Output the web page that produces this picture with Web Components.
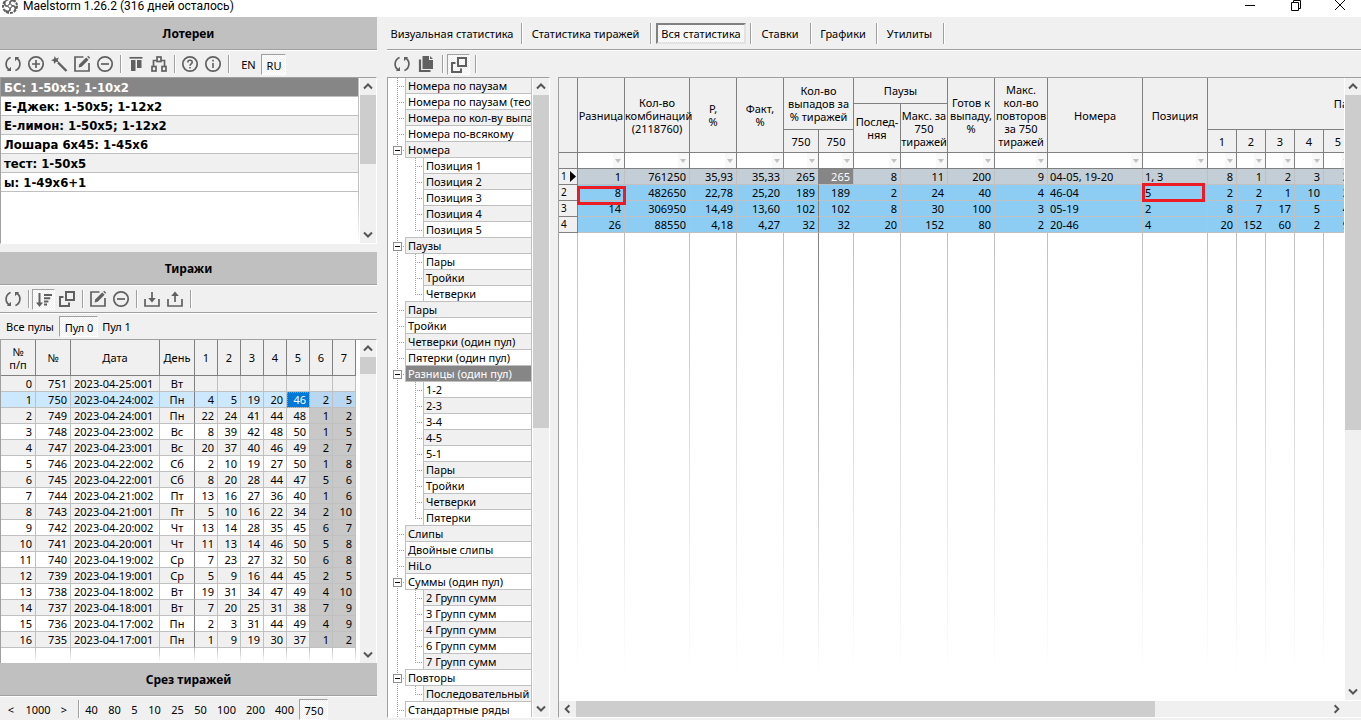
<!DOCTYPE html>
<html lang="ru">
<head>
<meta charset="utf-8">
<title>Maelstorm 1.26.2</title>
<style>
html, body { margin: 0; height: 100%; }
body {
  --ui: "DejaVu Sans Condensed", "DejaVu Sans", sans-serif;
  --face: #f0f0f0; --shade: #a0a0a0; --line: #c0c0c0; --dark: #808080; --ink: #000; --icon: #606060;
  background: var(--face); color: var(--ink); overflow: hidden;
  font: 11px/13px "Noto Sans", "Open Sans", sans-serif;
}
</style>
</head>
<body>
<mael-app></mael-app>
<script>
const define = (name, html, setup) => customElements.define(name, class extends HTMLElement {
  constructor() {
    super();
    const t = document.createElement('template');
    t.innerHTML = html;
    this.attachShadow({ mode: 'open' }).append(t.content.cloneNode(true));
  }
  connectedCallback() {
    if (setup && !this.ready) { this.ready = true; setup(this, this.shadowRoot); }
  }
});

/* ---------- icons, on an 18 x 18 grid ---------- */
const ICONS = {
  refresh: '<path d="M6.600 2.500A7 7 0 0 0 5 14.700M11.400 15.500A7 7 0 0 0 13 3.300"/><path fill="currentColor" stroke="none" d="M2.800 16H7V11.800L5.400 13.600ZM15.200 2H11V6.200L12.600 4.400Z"/>',
  add: '<circle cx="9" cy="9" r="7.2"/><path d="M9 5V13M5 9H13"/>',
  remove: '<circle cx="9" cy="9" r="7.2"/><path d="M5 9H13"/>',
  wand: '<path d="M8 7.5L16.5 16" stroke-width="2.4"/><path fill="currentColor" stroke="none" d="M4.8 1L6 3.4 9 2.6 7.6 5 9 7.6 6.2 6.8 4 9 3.8 6.2 1 5.2 3.8 4Z"/>',
  edit: '<path d="M10.5 2H2V16H16V8"/><path d="M5.600 12.400L6.200 9.400 13.200 2.400 15.600 4.800 8.600 11.800Z" fill="currentColor" stroke="none"/><path d="M14.2 1.8L15.2 .8 17.2 2.8 16.2 3.8Z" fill="currentColor" stroke="none"/>',
  align: '<path d="M2.500 2.800H15.500" /><path d="M4 5H8.500V16H4ZM10 5H14.500V13H10Z" fill="currentColor" stroke="none"/>',
  tree: '<path d="M3.5 11V5.5H7M14.5 11V5.5H11"/><rect x="7" y="2" width="4" height="4.5"/><rect x="2" y="11.5" width="4" height="4.5"/><rect x="12" y="11.5" width="4" height="4.5"/>',
  help: '<circle cx="9" cy="9" r="7.2"/><path d="M6.8 7.4C6.8 4.6 11.2 4.6 11.2 7.2C11.2 8.9 9 8.8 9 10.8M9 12V13.6" stroke-width="1.6"/>',
  info: '<circle cx="9" cy="9" r="7.2"/><path d="M9 8V13M9 4.8V6.4" stroke-width="1.6"/>',
  sort: '<path d="M4.5 2V13" stroke-width="2"/><path d="M1 11.5H8L4.5 16Z" fill="currentColor" stroke="none"/><path d="M9 4H17M9 7.2H15.2M9 10.4H13.4M9 13.4H12" stroke-width="2"/>',
  windows: '<rect x="8" y="2" width="8" height="8" stroke-width="2"/><path d="M5.5 7H2V16H11V12.5" stroke-width="2"/>',
  down: '<path d="M2 9V16H16V9M9 2V11"/><path d="M5.2 8H12.8L9 12.4Z" fill="currentColor" stroke="none"/>',
  up: '<path d="M2 9V16H16V9M9 12V4"/><path d="M5.2 6H12.8L9 1.4Z" fill="currentColor" stroke="none"/>',
  copy: '<path d="M5.500 1H12V5H16V14H5.500Z M13 1L16 4H13Z" fill="currentColor" stroke="none"/><path d="M3 4.5V16H13.5" stroke-width="2.2"/>',
  logo: '<circle cx="9" cy="9" r="7" stroke-width="2" stroke-dasharray="3 1"/><path d="M9 7C8 3 13 3 14 5M11 9C15 8 15 13 13 14M9 11C10 15 5 15 4 13M7 9C3 10 3 5 5 4" stroke-width="1.7"/><circle cx="9" cy="9" r="2" stroke-width="1"/>',
  minimize: '<path d="M4 8.500H14" stroke-width="1"/>',
  restore: '<path d="M4.5 5.5H11.5V13.5H4.5ZM6.5 5.5V3.5H13.5V11.5H11.5" stroke-width="1"/>',
  close: '<path d="M4 3L14 13M14 3L4 13" stroke-width="1"/>'
};
define('mael-icon', `<style>:host{display:block;width:18px;height:18px;color:var(--icon)}
svg{display:block;width:18px;height:18px;fill:none;stroke:currentColor;stroke-width:1.7}</style><svg viewBox="0 0 18 18" aria-hidden="true"></svg>`,
  (el, root) => { root.querySelector('svg').innerHTML = ICONS[el.getAttribute('name')]; });

/* ---------- toolbar parts ---------- */
define('mael-tool', `<style>
:host{display:block;flex:none}
button{box-sizing:border-box;width:var(--w,23px);height:21px;padding:0;border:1px solid transparent;background:none;font:inherit;color:inherit;display:flex;align-items:center;justify-content:center;white-space:nowrap}
:host([pressed]) button{border-color:var(--shade) #fff #fff var(--shade);background:repeating-conic-gradient(#fff 0 25%,var(--face) 0 50%) 0 0/2px 2px;padding:2px 0 0 1px}
:host([main][pressed]) button{border-width:2px;border-color:var(--dark) #e3e3e3 #e3e3e3 var(--dark);padding:0}
</style><button type="button"><slot></slot></button>`,
  (el, root) => {
    const b = root.querySelector('button');
    if (el.title) b.setAttribute('aria-label', el.title);
    if (el.hasAttribute('pressed')) b.setAttribute('aria-pressed', 'true');
  });
define('mael-sep', `<style>:host{display:block;flex:none;width:8px;height:18px;background:linear-gradient(90deg,var(--shade) 1px,#fff 1px) 4px 0/2px 100% no-repeat}</style>`);
define('mael-bar', `<style>:host{display:flex;align-items:center;height:26px;padding:0 1px;box-sizing:border-box;flex:none}</style><slot></slot>`);
define('mael-heading', `<style>:host{display:block;flex:none;border-bottom:1px solid #fff}
h2{margin:0;height:31px;padding-top:1px;font:bold 12px/31px "Noto Sans",sans-serif;text-align:center;background:var(--line);border-bottom:1px solid var(--shade)}</style><h2><slot></slot></h2>`);

/* ---------- scroll bar ---------- */
define('mael-scroll', `<style>
:host{display:flex;flex-direction:column;flex:none;width:16px;background:var(--face)}
:host([horizontal]){flex-direction:row;width:auto;height:16px}
svg{flex:none;width:16px;height:17px;fill:none;stroke:#555;stroke-width:2}
:host([horizontal]) svg{transform:rotate(-90deg);width:17px;height:16px}
.track{flex:1;display:flex;flex-direction:inherit;min-height:0;min-width:0}
.thumb{background:#cdcdcd}
</style><svg viewBox="0 0 16 17"><path d="M4 10.500L8 6.500L12 10.500"/></svg><div class="track"><div class="thumb"></div></div><svg viewBox="0 0 16 17"><path d="M4 6.500L8 10.500L12 6.500"/></svg>`,
  (el, root) => { root.querySelector('.thumb').style.flex = '0 0 ' + el.getAttribute('size') + '%'; });

/* ---------- lottery list ---------- */
define('mael-lotteries', `<style>
:host{display:flex;flex:none;height:165px;background:#fff;border:1px solid #fff;border-top-color:var(--shade);border-left-color:var(--shade)}
ul{margin:0 1px 0 0;padding:0;list-style:none;flex:1;min-width:0;font:bold 13px/17px var(--ui);background:linear-gradient(var(--line),var(--line) 70%,#fff) right/1px 100% no-repeat}
li{padding:1px 0 0 3px;border-bottom:1px solid var(--line);margin-right:1px}
li:nth-child(odd){background:var(--face)}
li[aria-selected=true]{background:#868686;color:#fff}
</style><ul role="listbox" aria-label="Лотереи"></ul><mael-scroll size="53"></mael-scroll>`,
  (el, root) => {
    root.querySelector('ul').innerHTML = ['БС: 1-50x5; 1-10x2', 'Е-Джек: 1-50x5; 1-12x2', 'Е-лимон: 1-50x5; 1-12x2', 'Лошара 6x45: 1-45x6', 'тест: 1-50x5', 'ы: 1-49x6+1']
      .map((s, i) => `<li role="option" aria-selected="${i === 0}">${s}</li>`).join('');
  });

/* ---------- draws table ---------- */
const DRAWS = `751 2023-04-25:001 Вт
750 2023-04-24:002 Пн 4 5 19 20 46 2 5
749 2023-04-24:001 Пн 22 24 41 44 48 1 2
748 2023-04-23:002 Вс 8 39 42 48 50 1 5
747 2023-04-23:001 Вс 20 37 40 46 49 2 7
746 2023-04-22:002 Сб 2 10 19 27 50 1 8
745 2023-04-22:001 Сб 8 20 28 44 47 5 6
744 2023-04-21:002 Пт 13 16 27 36 40 1 6
743 2023-04-21:001 Пт 5 10 16 22 34 2 10
742 2023-04-20:002 Чт 13 14 28 35 45 6 7
741 2023-04-20:001 Чт 11 13 14 46 50 5 8
740 2023-04-19:002 Ср 7 23 27 32 50 6 8
739 2023-04-19:001 Ср 5 9 16 44 45 2 5
738 2023-04-18:002 Вт 19 31 34 47 49 4 10
737 2023-04-18:001 Вт 7 20 25 31 38 7 9
736 2023-04-17:002 Пн 2 3 31 44 49 4 9
735 2023-04-17:001 Пн 1 9 19 30 37 1 2`.split('\n').map(r => r.split(' '));
const DRAW_COLS = [35, 35, 89, 35, 23, 23, 23, 23, 23, 23, 23];
const cols = w => '<colgroup>' + w.map(x => `<col style="width:${x}px">`).join('') + '</colgroup>';
const filler = w => `<div class="filler" style="grid-template-columns:${w.map(x => x + 'px').join(' ')}">${w.map(() => '<i></i>').join('')}</div>`;
const GRID_CSS = `
table{table-layout:fixed;border-collapse:separate;border-spacing:0;flex:none}
th,td{box-sizing:border-box;padding:0;font-weight:normal;white-space:nowrap;border-right:1px solid var(--line);border-bottom:1px solid var(--line)}
th{border-color:var(--dark);background:var(--face);text-align:center}
td{height:16px;line-height:15px;text-align:right;padding-right:3px}
.filler{display:grid;flex:1;min-height:0}
.filler i{background:linear-gradient(var(--line),#fff 95%) right/1px 100% no-repeat}`;
define('mael-draws', `<style>
:host{display:flex;flex:1;min-height:0;background:#fff;border:1px solid #fff;border-top-color:var(--shade);border-left-color:var(--shade);border-bottom:0}
.view{flex:1;min-width:0;overflow:hidden;display:flex;flex-direction:column}
${GRID_CSS}
th{height:36px}
tr:nth-child(odd) td{background:var(--face)}
td:nth-child(3){text-align:left;padding:0 0 0 3px}
td:nth-child(4){text-align:center;padding:0;border-right-color:var(--dark)}
tr:nth-child(n+2) td:nth-child(n+10){background:#c8c8c8}
tr.sel td{background:#cce8ff}
tr.sel td:nth-child(n+10){background:#b9d7f1}
tr.sel td:nth-child(9){background:#0078d7;color:#fff;outline:1px dotted #e08a3c;outline-offset:-1px}
</style><div class="view"></div><mael-scroll size="6"></mael-scroll>`,
  (el, root) => {
    const head = ['№<br>п/п', '№', 'Дата', 'День', 1, 2, 3, 4, 5, 6, 7].map(h => `<th scope="col">${h}</th>`).join('');
    const body = DRAWS.map((r, i) => `<tr${i === 1 ? ' class="sel"' : ''}><td>${i}</td>` +
      Array.from({ length: 10 }, (_, k) => `<td>${r[k] || ''}</td>`).join('') + '</tr>').join('');
    root.querySelector('.view').innerHTML = `<table style="width:355px">${cols(DRAW_COLS)}<thead><tr>${head}</tr></thead><tbody>${body}</tbody></table>` + filler(DRAW_COLS);
  });

/* ---------- statistics tree ---------- */
const TREE = [['Номера по паузам'], ['Номера по паузам (теория)'], ['Номера по кол-ву выпадов'], ['Номера по-всякому'],
  ['Номера', 'Позиция 1', 'Позиция 2', 'Позиция 3', 'Позиция 4', 'Позиция 5'], ['Паузы', 'Пары', 'Тройки', 'Четверки'],
  ['Пары'], ['Тройки'], ['Четверки (один пул)'], ['Пятерки (один пул)'],
  ['Разницы (один пул)', '1-2', '2-3', '3-4', '4-5', '5-1', 'Пары', 'Тройки', 'Четверки', 'Пятерки'],
  ['Слипы'], ['Двойные слипы'], ['HiLo'], ['Суммы (один пул)', '2 Групп сумм', '3 Групп сумм', '4 Групп сумм', '6 Групп сумм', '7 Групп сумм'],
  ['Повторы', 'Последовательный с'], ['Стандартные ряды']];
define('mael-tree', `<style>
:host{display:flex;flex:none;width:161px;background:#fff;border:1px solid #fff;border-top-color:var(--shade);border-left-color:var(--shade);overflow:hidden}
ul{margin:0 1px 0 0;padding:0;list-style:none;flex:1;min-width:0;height:0}
li{display:flex;height:16px;
 --v:repeating-linear-gradient(var(--shade) 0 1px,transparent 1px 2px);--h:repeating-linear-gradient(90deg,var(--shade) 0 1px,transparent 1px 2px);
 background:var(--v) 9px 0/1px 100% no-repeat,var(--h) 9px 8px/8px 1px no-repeat}
li.kid{background:var(--v) 9px 0/1px 100% no-repeat,var(--v) 27px 0/1px 100% no-repeat,var(--h) 27px 8px/8px 1px no-repeat}
li.kid.last{background:var(--v) 9px 0/1px 100% no-repeat,var(--v) 27px 0/1px 8px no-repeat,var(--h) 27px 8px/8px 1px no-repeat}
i{flex:none;width:17px;display:flex;align-items:center}
.kid i{width:35px}
svg{margin-left:5px;width:9px;height:9px}
span{flex:1;min-width:0;overflow:hidden;white-space:nowrap;box-sizing:border-box;height:16px;line-height:15px;padding-left:2px;border-left:1px solid var(--line);border-bottom:1px solid var(--line);border-right:1px solid var(--line);background:#fff}
li:nth-child(odd) span{background:var(--face)}
.last + li span{box-shadow:0 -1px 0 var(--line)}
li[aria-selected=true] span{background:#868686!important;color:#fff}
</style><ul role="tree" aria-label="Разделы статистики"></ul><mael-scroll size="55"></mael-scroll>`,
  (el, root) => {
    const box = '<svg viewBox="0 0 9 9" aria-hidden="true"><rect x=".5" y=".5" width="8" height="8" fill="#fff" stroke="#919191"/><path d="M2 4.500H7" stroke="#000"/></svg>';
    root.querySelector('ul').innerHTML = TREE.map(([name, ...kids]) =>
      `<li role="treeitem" aria-selected="${name.startsWith('Разницы')}"><i>${kids.length ? box : ''}</i><span>${name}</span></li>` +
      kids.map((k, n) => `<li role="treeitem" class="kid${n === kids.length - 1 ? ' last' : ''}"><i></i><span>${k}</span></li>`).join('')).join('');
  });

/* ---------- statistics grid ---------- */
const STAT_COLS = [19, 47, 65, 47, 47, 35, 35, 47, 47, 47, 53, 95, 65, 29, 29, 29, 29, 29, 141];
const STATS = ['1|761250|35,93|35,33|265|265|8|11|200|9|04-05, 19-20|1, 3|8|1|2|3|3', '8|482650|22,78|25,20|189|189|2|24|40|4|46-04|5|2|2|1|10|3',
  '14|306950|14,49|13,60|102|102|8|30|100|3|05-19|2|8|7|17|5|4', '26|88550|4,18|4,27|32|32|20|152|80|2|20-46|4|20|152|60|2|9'];
define('mael-stats', `<style>
:host{display:flex;flex-direction:column;flex:1;min-width:0;background:#fff;border:1px solid #fff;border-top-color:var(--shade);border-left-color:var(--shade);border-right:0;overflow:hidden}
.row{display:flex;flex:1;min-height:0}
.view{position:relative;flex:1;min-width:0;overflow:hidden;display:flex;flex-direction:column;margin-right:1px}
${GRID_CSS}
tr.a{height:26px} tr.c{height:23px}
tr.filter td{border-color:var(--dark);background:#fff linear-gradient(#f8f8f8,#f8f8f8) right/11px 100% no-repeat;padding:0 3px 0 0}
tr.filter svg{display:block;margin-left:auto;width:6px;height:4px;fill:var(--line)}
tr.filter td:first-child{background:var(--face)}
tbody td{background:#8dcdf4}
tbody tr:first-child td{background:#c3ced6}
tbody th{text-align:left;font-size:10px;line-height:15px;padding-left:2px;height:16px}
tbody th div{display:flex;align-items:center;gap:3px}
tbody th svg{width:6px;height:11px}
tbody td:nth-child(12),tbody td:nth-child(13){text-align:left;padding:0 0 0 2px}
tbody td:nth-child(6){border-right-color:var(--dark)}
tbody tr:first-child td:nth-child(7){background:#868686;color:#fff}
.filler i:nth-child(6){background-image:linear-gradient(var(--dark),#fff 95%)}
.mark{position:absolute;box-sizing:border-box;border:3px solid #ed1c24;height:19px}
.m1{left:18px;top:108px;width:49px}
.m2{left:583px;top:105px;width:63px}
.foot{display:flex;margin-top:1px;background:var(--face)}
.foot mael-scroll{flex:1;margin-right:16px}
</style><div class="row"><div class="view"></div><mael-scroll size="57"></mael-scroll></div><div class="foot"><mael-scroll horizontal size="77"></mael-scroll></div>`,
  (el, root) => {
    const t = (s, a = '') => `<th ${a}>${s}</th>`, full = 'rowspan="3"';
    const head = `<tr class="a">${t('', full)}${['Разница', 'Кол-во<br>комбинаций<br>(2118760)', 'P,<br>%', 'Факт,<br>%'].map(s => t(s, full)).join('')}
${t('Кол-во<br>выпадов за<br>% тиражей', 'colspan="2" rowspan="2"')}${t('Паузы', 'colspan="2"')}${['Готов к<br>выпаду,<br>%', 'Макс.<br>кол-во<br>повторов<br>за 750<br>тиражей', 'Номера', 'Позиция'].map(s => t(s, full)).join('')}${t('Паузы', 'colspan="6" rowspan="2"')}</tr>
<tr class="a">${t('Послед-<br>няя', 'rowspan="2"')}${t('Макс. за<br>750<br>тиражей', 'rowspan="2"')}</tr>
<tr class="c">${[750, 750, 1, 2, 3, 4, 5, ''].map(s => t(s)).join('')}</tr>
<tr class="filter"><td></td>${STAT_COLS.slice(1).map(() => '<td><svg viewBox="0 0 6 4"><path d="M0 0H6L3 4Z"/></svg></td>').join('')}</tr>`;
    const body = STATS.map((r, i) => `<tr><th scope="row"><div>${i + 1}${i ? '' : '<svg viewBox="0 0 6 11"><path d="M0 0L6 5.500L0 11Z"/></svg>'}</div></th>${r.split('|').map(v => `<td>${v}</td>`).join('')}<td></td></tr>`).join('');
    root.querySelector('.view').innerHTML = `<table style="width:${STAT_COLS.reduce((a, b) => a + b)}px">${cols(STAT_COLS)}<thead>${head}</thead><tbody>${body}</tbody></table>${filler(STAT_COLS)}<div class="mark m1"></div><div class="mark m2"></div>`;
  });

/* ---------- window ---------- */
const tool = (icon, title, extra = '') => `<mael-tool title="${title}" ${extra}><mael-icon name="${icon}"></mael-icon></mael-tool>`;
const word = (s, w, extra = '') => `<mael-tool style="--w:${w}px" ${extra}>${s}</mael-tool>`;
const S = '<mael-sep></mael-sep>';
define('mael-app', `<style>
:host{display:flex;flex-direction:column;height:100vh}
header{display:flex;align-items:center;flex:none;height:12px;padding-bottom:5px;background:#fff}
header > mael-icon{margin-left:1px}
h1{margin:0 0 0 4px;flex:1;font:12px/12px Roboto,"Noto Sans",sans-serif}
header mael-tool mael-icon{--icon:#000}
main{flex:1;min-height:0;display:flex;gap:10px}
.left{flex:none;width:377px;display:flex;flex-direction:column}
.gap{flex:none;height:8px}
.ruled{height:27px;border-bottom:1px solid var(--shade);box-shadow:0 1px 0 #fff}
.pools{padding:1px 1px 0}
.slice{height:23px;padding:1px 0 0}
.slice mael-sep{width:6px}
.right{flex:1;min-width:0;display:flex;flex-direction:column}
nav{display:flex;align-items:center;flex:none;height:32px;border-bottom:1px solid var(--shade);box-shadow:0 1px 0 #fff;margin-bottom:1px}
nav mael-sep{height:21px}
nav [main]{margin-left:2px}
.lang{margin-left:4px}
.views{padding-left:3px;gap:1px}
.work{flex:1;min-height:0;display:flex;gap:8px;padding-bottom:2px}
</style>
<header><mael-icon name="logo"></mael-icon><h1>Maelstorm 1.26.2 (316 дней осталось)</h1>
${tool('minimize', 'Свернуть', 'style="--w:46px"')}${tool('restore', 'Восстановить', 'style="--w:46px"')}${tool('close', 'Закрыть', 'style="--w:42px"')}</header>
<main>
<section class="left">
<mael-heading>Лотереи</mael-heading>
<mael-bar>${tool('refresh', 'Обновить')}${tool('add', 'Добавить')}${tool('wand', 'Мастер')}${tool('edit', 'Изменить')}${tool('remove', 'Удалить')}${S}${tool('align', 'Столбцы')}${tool('tree', 'Схема')}${S}${tool('help', 'Справка')}${tool('info', 'О программе')}${S}${word('EN', 25, 'class="lang"')}${word('RU', 25, 'pressed')}</mael-bar>
<mael-lotteries></mael-lotteries>
<div class="gap"></div>
<mael-heading>Тиражи</mael-heading>
<mael-bar class="ruled">${tool('refresh', 'Обновить')}${S}${tool('sort', 'Сортировка', 'pressed')}${tool('windows', 'Окна')}${S}${tool('edit', 'Изменить')}${tool('remove', 'Удалить')}${S}${tool('down', 'Импорт')}${tool('up', 'Экспорт')}${S}</mael-bar>
<mael-bar class="pools">${word('Все пулы', 58)}${word('Пул 0', 39, 'pressed')}${word('Пул 1', 37)}</mael-bar>
<mael-draws></mael-draws>
<mael-heading>Срез тиражей</mael-heading>
<mael-bar class="slice">${word('&lt;', 22)}${word('1000', 32)}${word('&gt;', 20)}${S}${[40, 80, 5, 10, 25, 50, 100, 200, 400].map(n => word(n, n < 10 ? 17 : n < 100 ? 23 : 29)).join('')}${word(750, 29, 'pressed')}</mael-bar>
</section>
<section class="right">
<nav>${word('Визуальная статистика', 130)}${S}${word('Статистика тиражей', 121)}${S}${word('Вся статистика', 90, 'pressed main')}${S}${word('Ставки', 52)}${S}${word('Графики', 58)}${S}${word('Утилиты', 59)}${S}</nav>
<mael-bar class="views">${tool('refresh', 'Обновить')}${tool('copy', 'Копировать')}${S}${tool('windows', 'Окна', 'pressed')}${S}</mael-bar>
<div class="work"><mael-tree></mael-tree><mael-stats></mael-stats></div>
</section>
</main>`);
</script>
</body>
</html>
